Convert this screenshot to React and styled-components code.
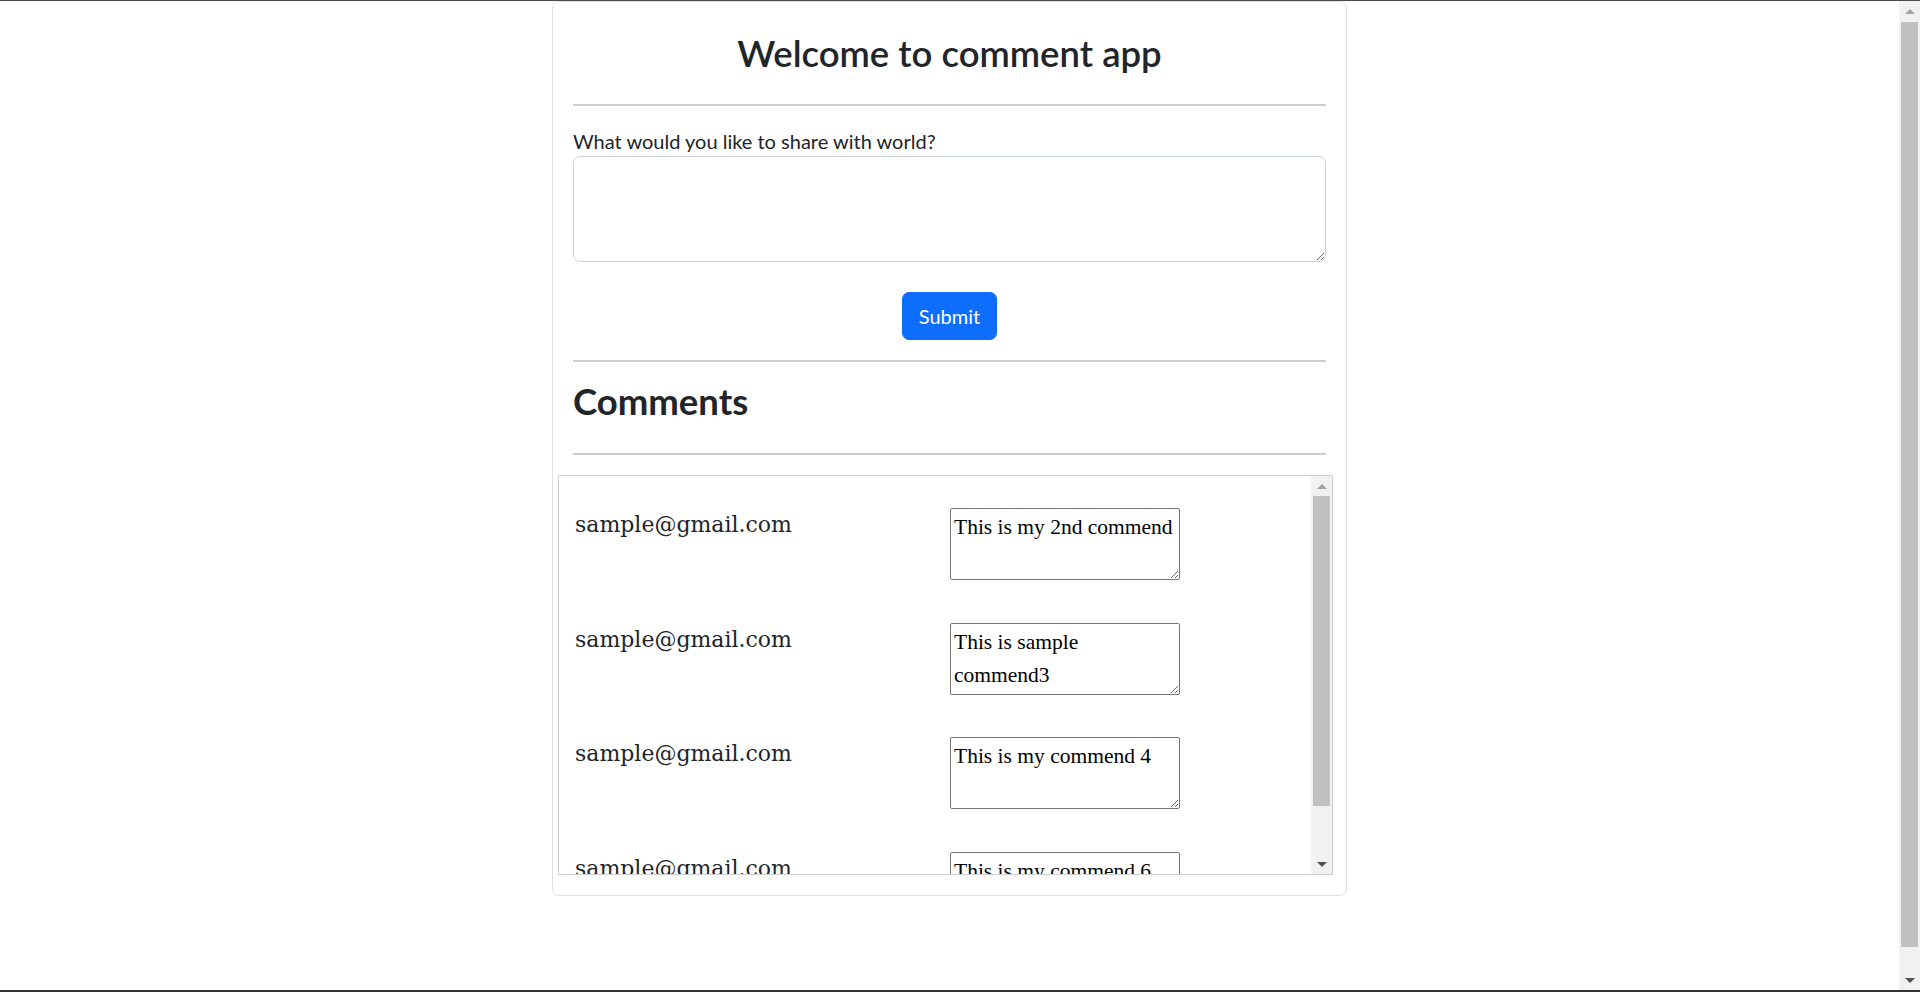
import React from "react";
import styled, { createGlobalStyle } from "styled-components";

const GlobalStyle = createGlobalStyle`
  * {
    box-sizing: border-box;
  }
  html,
  body {
    margin: 0;
    padding: 0;
    height: 100%;
    overflow: hidden;
    background: #fff;
  }
  body {
    font-family: Lato, "Noto Sans", sans-serif;
    color: #212529;
  }
`;

const Frame = styled.div`
  display: flex;
  flex-direction: column;
  height: 992px;
`;

const Edge = styled.div`
  flex: none;
  height: ${props => props.$size}px;
  background: ${props => props.$color};
`;

const Viewport = styled.div`
  flex: 1;
  min-height: 0;
  display: flex;
`;

const Main = styled.main`
  flex: 1;
  min-width: 0;
  overflow: hidden;
`;

const Card = styled.div`
  width: 795px;
  margin: 0 auto;
  padding: 20px;
  border: 1px solid #dfdfdf;
  border-radius: 7px;
  background: #fff;
`;

/* margins below collapse with the hr's 20px */
const Title = styled.h2`
  margin: 10px 0 30px;
  font-size: 36.5px;
  font-weight: 600;
  line-height: 42px;
  text-align: center;
`;

const SectionTitle = styled.h3`
  margin: -2px 0 31px;
  font-size: 36.5px;
  font-weight: 700;
  line-height: 42px;
`;

const Rule = styled.hr`
  margin: 20px 0;
  border: 0;
  border-top: 2px solid #cdcdcd;
`;

const Label = styled.label`
  display: block;
  font-size: 20px;
  line-height: 30px;
`;

const BigInput = styled.textarea`
  display: block;
  width: 100%;
  height: 106px;
  padding: 8px 15px;
  border: 1px solid #ced4da;
  border-radius: 7px;
  font-family: inherit;
  font-size: 20px;
  resize: vertical;
  outline: none;
`;

const Actions = styled.div`
  display: flex;
  justify-content: center;
  margin-top: 30px;
`;

const SubmitButton = styled.button`
  height: 48px;
  padding: 0 16px;
  border: 1px solid #0d6efd;
  border-radius: 7px;
  background: #0d6efd;
  color: #fff;
  font-family: inherit;
  font-size: 20px;
  line-height: 30px;
`;

const CommentBox = styled.div`
  display: flex;
  width: 775px;
  height: 400px;
  margin-left: -15px;
  border: 1px solid #cfcfcf;
`;

const CommentList = styled.div`
  flex: 1;
  min-width: 0;
  overflow: hidden;
  padding-top: 16px;
`;

const CommentRow = styled.div`
  display: grid;
  grid-template-columns: 1fr 1fr;
  padding: 16px 16px 26.5px;
`;

const Email = styled.p`
  margin: 0;
  font-family: "DejaVu Serif", "Liberation Serif", serif;
  font-size: 22px;
  line-height: 33px;
  color: #212529;
`;

const CommentText = styled.textarea`
  width: 230px;
  height: 72px;
  margin-left: 15px;
  padding: 2px 3px;
  border: 1px solid #767676;
  border-radius: 2px;
  font-family: "Liberation Serif", "DejaVu Serif", serif;
  font-size: 21.5px;
  line-height: 33px;
  color: #000;
  background: #fff;
  overflow: hidden;
  outline: none;
`;

const ScrollTrack = styled.div`
  flex: none;
  width: 21px;
  display: flex;
  flex-direction: column;
  background: #f1f1f1;
`;

const ScrollButton = styled.div`
  flex: none;
  height: 20px;
  display: flex;
  align-items: center;
  justify-content: center;
`;

const Arrow = styled.span`
  width: 0;
  height: 0;
  border-left: 5px solid transparent;
  border-right: 5px solid transparent;
  ${props =>
    props.$down
      ? `border-top: 5px solid ${props.$color};`
      : `border-bottom: 5px solid ${props.$color};`}
`;

const ThumbArea = styled.div`
  flex: 1;
  padding: 0 2px;
`;

const Thumb = styled.div`
  height: ${props => props.$length}px;
  margin-top: ${props => props.$offset}px;
  background: #c1c1c1;
`;

const Scrollbar = ({ length, offset }) => (
  <ScrollTrack>
    <ScrollButton>
      <Arrow $color="#a3a3a3" />
    </ScrollButton>
    <ThumbArea>
      <Thumb $length={length} $offset={offset} />
    </ThumbArea>
    <ScrollButton>
      <Arrow $down $color="#505050" />
    </ScrollButton>
  </ScrollTrack>
);

const comments = [
  { id: 2, email: "sample@gmail.com", text: "This is my 2nd commend" },
  { id: 3, email: "sample@gmail.com", text: "This is sample commend3" },
  { id: 4, email: "sample@gmail.com", text: "This is my commend 4" },
  { id: 6, email: "sample@gmail.com", text: "This is my commend 6" },
  { id: 7, email: "sample@gmail.com", text: "This is my commend 7" }
];

const App = () => (
  <>
    <GlobalStyle />
    <Frame>
      <Edge $size={1} $color="#4a4a4a" />
      <Viewport>
        <Main>
          <Card>
            <Title>Welcome to comment app</Title>
            <Rule />
            <Label htmlFor="comment">What would you like to share with world?</Label>
            <BigInput id="comment" />
            <Actions>
              <SubmitButton type="button">Submit</SubmitButton>
            </Actions>
            <Rule />
            <SectionTitle>Comments</SectionTitle>
            <Rule />
            <CommentBox>
              <CommentList>
                {comments.map(({ id, email, text }) => (
                  <CommentRow key={id}>
                    <Email>{email}</Email>
                    <CommentText readOnly defaultValue={text} />
                  </CommentRow>
                ))}
              </CommentList>
              <Scrollbar length={310} offset={0} />
            </CommentBox>
          </Card>
        </Main>
        <Scrollbar length={925} offset={1} />
      </Viewport>
      <Edge $size={2} $color="#333" />
    </Frame>
  </>
);

export default App;
